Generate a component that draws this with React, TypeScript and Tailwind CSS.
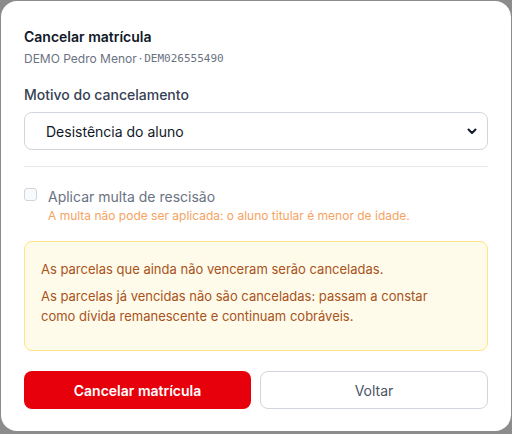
import React from "react";

export default function App() {
  return (
    <div className="w-[512px] h-[434px] bg-[#8c8c8c] overflow-hidden pt-[1px] pl-[1px]" style={{ fontFamily: "Inter, 'Noto Sans', sans-serif" }}>
      <div className="w-[510px] h-[430px] bg-white rounded-2xl px-[23px] pt-[26px]">
        <h2 className="text-[14px] leading-5 font-semibold text-gray-900">Cancelar matrícula</h2>
        <div className="mt-[2px] text-[12px] leading-5 text-gray-500 flex items-center">
          <span>DEMO Pedro Menor</span>
          <span className="mx-[2px]">·</span>
          <span className="text-[11px]" style={{ fontFamily: "'DejaVu Sans Mono', monospace" }}>DEM026555490</span>
        </div>

        <div className="mt-[16px] text-[14px] leading-5 font-medium text-gray-700">Motivo do cancelamento</div>
        <div className="mt-[7px] h-[38px] w-[464px] border border-gray-300 rounded-lg flex items-center justify-between pl-[21px] pr-[9px]">
          <span className="text-[14px] text-gray-900">Desistência do aluno</span>
          <svg width="12" height="12" viewBox="0 0 12 12" fill="none">
            <path d="M2.5 4.5 L6 8 L9.5 4.5" stroke="#111827" strokeWidth="2" strokeLinecap="round" strokeLinejoin="round" />
          </svg>
        </div>

        <div className="mt-[16px] h-px w-[464px] bg-gray-200" />

        <div className="mt-[21px] flex items-start gap-[11px]">
          <div className="w-[13px] h-[13px] rounded-[3px] border border-gray-300 bg-gray-50" />
          <div>
            <div className="text-[14px] leading-5 text-gray-500 -mt-[1px]">Aplicar multa de rescisão</div>
            <div className="text-[12px] leading-4 text-[#f5a35f] mt-[1px]">A multa não pode ser aplicada: o aluno titular é menor de idade.</div>
          </div>
        </div>

        <div className="mt-[17px] w-[464px] h-[110px] rounded-lg border border-amber-200 bg-[#fefbea] pl-[16px] pr-[44px] pt-[17px] text-[13px] leading-5 text-[#a9521a]">
          <p>As parcelas que ainda não venceram serão canceladas.</p>
          <p className="mt-[7px]">As parcelas já vencidas não são canceladas: passam a constar como dívida remanescente e continuam cobráveis.</p>
        </div>

        <div className="mt-[20px] flex gap-[9px] w-[464px]">
          <button className="w-[227px] h-[38px] rounded-lg bg-[#e7000b] text-white text-[14px] font-semibold">Cancelar matrícula</button>
          <button className="w-[228px] h-[38px] rounded-lg border border-gray-300 bg-white text-gray-600 text-[14px]">Voltar</button>
        </div>
      </div>
    </div>
  );
}
